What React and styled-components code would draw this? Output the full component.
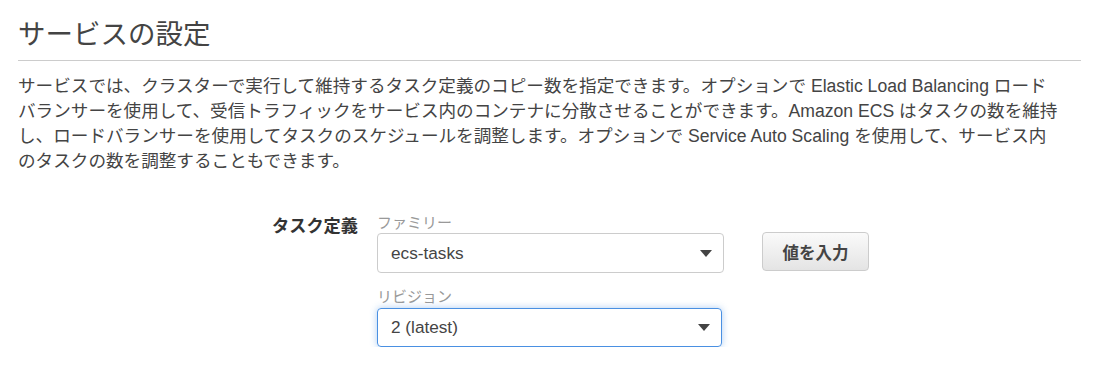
import React from 'react'
import styled, { createGlobalStyle } from 'styled-components'

const Global = createGlobalStyle`
  body {
    margin: 0;
    background: #fff;
    font-family: "Liberation Sans", "Noto Sans CJK JP", sans-serif;
    color: #444;
  }
`

const Page = styled.div`
  padding: 17px 28px 0 18px;
`

const Title = styled.h2`
  margin: 0;
  padding-bottom: 7px;
  font-size: 27.5px;
  font-weight: normal;
  line-height: 36px;
  color: #444;
  border-bottom: 1px solid #ccc;
`

const Intro = styled.p`
  margin: 13px 0 0;
  font-size: 17.6px;
  line-height: 25px;
  color: #444;
  white-space: nowrap;
`

const Form = styled.div`
  display: grid;
  grid-template-columns: 340px 347px auto;
  column-gap: 19px;
  margin-top: 40px;
`

const RowLabel = styled.div`
  text-align: right;
  font-weight: bold;
  font-size: 17.2px;
  line-height: 25px;
  color: #333;
`

const Fields = styled.div`
  display: flex;
  flex-direction: column;
  gap: 15px;
`

const Field = styled.div`
  display: flex;
  flex-direction: column;
`

const SmallLabel = styled.span`
  font-size: 15px;
  line-height: 18px;
  color: #999;
  margin-bottom: ${p => (p.second ? '2px' : '1px')};
`

const Select = styled.div`
  display: flex;
  align-items: center;
  justify-content: space-between;
  box-sizing: border-box;
  width: ${p => (p.focused ? '345px' : '347px')};
  height: ${p => (p.focused ? '39px' : '40px')};
  padding: 0 11px 0 13px;
  border: 1px solid ${p => (p.focused ? '#4a90e2' : '#ccc')};
  border-radius: 4px;
  box-shadow: ${p => (p.focused ? '0 0 7px rgba(74,144,226,0.45)' : 'none')};
  font-size: 17.2px;
  color: #444;
`

const Caret = styled.span`
  width: 0;
  height: 0;
  border-left: 6.5px solid transparent;
  border-right: 6.5px solid transparent;
  border-top: 7px solid #444;
`

const Actions = styled.div`
  padding-top: 18px;
  padding-left: 19px;
`

const Button = styled.button`
  box-sizing: border-box;
  height: 39px;
  width: 107px;
  padding: 0;
  border: 1px solid #ccc;
  border-radius: 4px;
  background: linear-gradient(#fafafa, #e4e4e4);
  font-family: inherit;
  font-size: 16.5px;
  font-weight: bold;
  color: #444;
`

const lines = [
  'サービスでは、クラスターで実行して維持するタスク定義のコピー数を指定できます。オプションで Elastic Load Balancing ロード',
  'バランサーを使用して、受信トラフィックをサービス内のコンテナに分散させることができます。Amazon ECS はタスクの数を維持',
  'し、ロードバランサーを使用してタスクのスケジュールを調整します。オプションで Service Auto Scaling を使用して、サービス内',
  'のタスクの数を調整することもできます。',
]

export default function App() {
  return (
    <>
      <Global />
      <Page>
        <Title>サービスの設定</Title>
        <Intro>
          {lines.map((line, i) => (
            <React.Fragment key={i}>
              {line}
              {i < lines.length - 1 && <br />}
            </React.Fragment>
          ))}
        </Intro>
        <Form>
          <RowLabel>タスク定義</RowLabel>
          <Fields>
            <Field>
              <SmallLabel>ファミリー</SmallLabel>
              <Select>
                ecs-tasks
                <Caret />
              </Select>
            </Field>
            <Field>
              <SmallLabel second>リビジョン</SmallLabel>
              <Select focused>
                2 (latest)
                <Caret />
              </Select>
            </Field>
          </Fields>
          <Actions>
            <Button>値を入力</Button>
          </Actions>
        </Form>
      </Page>
    </>
  )
}
